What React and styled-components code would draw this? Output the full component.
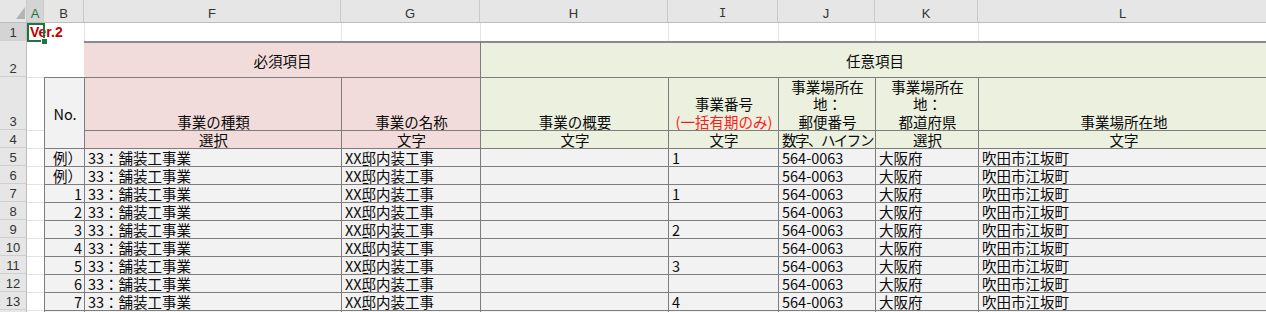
import React from 'react';
import styled, { createGlobalStyle } from 'styled-components';

const GlobalStyle = createGlobalStyle`
  html, body { margin: 0; padding: 0; background: #fff; overflow: hidden; }
`;

const CJK = `"Noto Sans CJK JP", "Noto Sans", sans-serif`;
const UI = `"Liberation Sans", Arial, sans-serif`;
const LINE = '1px solid #7d7d7d';
const THICK = '2px solid #8a8a8a';
const GRID = '1px solid #e3e3e3';
const PINK = '#f2dcdb';
const GREEN = '#ebf1de';
const GRAY = '#f2f2f2';

const Sheet = styled.div`
  display: grid;
  grid-template-columns: 27px 17px 40px 257px 139px 188px 110px 97px 103px 290px;
  grid-template-rows: 23px 18px 36px 53px 18px repeat(10, 18px);
  width: 1268px;
  font-family: ${CJK};
  font-size: 14.5px;
  color: #0a0a0a;
`;

const Corner = styled.div`
  box-sizing: border-box;
  background: #e6e6e6;
  border-right: 1px solid #cacaca;
  border-bottom: 1px solid #bdbdbd;
  display: flex;
  align-items: flex-end;
  justify-content: flex-end;
  padding: 0 1px 3px 0;
`;

const ColHead = styled.div`
  box-sizing: border-box;
  background: ${p => (p.$active ? '#d4d4d4' : '#e6e6e6')};
  color: ${p => (p.$active ? '#217346' : '#333')};
  border-right: 1px solid #cacaca;
  border-bottom: 1px solid #bdbdbd;
  display: flex;
  align-items: flex-end;
  justify-content: center;
  font-family: ${p => (p.$serif ? `"DejaVu Sans Mono", monospace` : UI)};
  font-size: ${p => (p.$serif ? '12px' : '13px')};
  line-height: 15px;
  padding-bottom: 1px;
`;

const RowHead = styled.div`
  box-sizing: border-box;
  background: ${p => (p.$active ? '#d4d4d4' : '#e6e6e6')};
  color: #333;
  border-right: 1px solid #bdbdbd;
  border-bottom: 1px solid #cfcfcf;
  display: flex;
  align-items: flex-end;
  justify-content: center;
  font-family: ${UI};
  font-size: 13px;
  line-height: 15px;
`;

const Cell = styled.div`
  box-sizing: border-box;
  min-width: 0;
  grid-column: span ${p => p.$cs || 1};
  grid-row: span ${p => p.$rs || 1};
  background: ${p => p.$bg || '#fff'};
  border-top: ${p => p.$bt || 'none'};
  border-left: ${p => p.$bl || 'none'};
  display: flex;
  flex-direction: column;
  justify-content: ${p =>
    p.$valign === 'center' ? 'center' : p.$valign === 'top' ? 'flex-start' : 'flex-end'};
  text-align: ${p => p.$align || 'left'};
  line-height: ${p => (p.$lh ? p.$lh : '17px')};
  letter-spacing: ${p => (p.$tight ? '-1.5px' : 'normal')};
  padding: 0 2px 0 3px;
  white-space: nowrap;
  overflow: visible;
`;

const SelectedCell = styled(Cell)`
  position: relative;
  z-index: 2;
  justify-content: center;
`;

const Selection = styled.div`
  position: absolute;
  left: 0;
  top: 0;
  right: -1px;
  bottom: -1px;
  border: 2px solid #217346;
  pointer-events: none;
`;

const FillHandle = styled.div`
  position: absolute;
  right: -4px;
  bottom: -4px;
  width: 5px;
  height: 5px;
  background: #217346;
  border: 1px solid #fff;
`;

const Version = styled.span`
  font-family: ${UI};
  font-weight: bold;
  font-size: 14px;
  color: #c00000;
  line-height: 17px;
`;

const Red = styled.span`
  color: #ff1a1a;
`;

const Line = styled.div``;

const letters = ['A', 'B', 'F', 'G', 'H', 'I', 'J', 'K', 'L'];

const dataRows = [
  { n: '例）', no: '1' },
  { n: '例）', no: '' },
  { n: '1', no: '1' },
  { n: '2', no: '' },
  { n: '3', no: '2' },
  { n: '4', no: '' },
  { n: '5', no: '3' },
  { n: '6', no: '' },
  { n: '7', no: '4' },
];

function HeaderCell({ bg, children, ...rest }) {
  return (
    <Cell $bg={bg} $bt={LINE} $bl={LINE} $align="center" $lh="17.5px" {...rest}>
      {children}
    </Cell>
  );
}

export default function App() {
  return (
    <>
      <GlobalStyle />
      <Sheet>
        <Corner>
          <svg width="9" height="12" viewBox="0 0 9 12">
            <polygon points="9,0 9,12 0,12" fill="#b4b4b4" />
          </svg>
        </Corner>
        {letters.map(l => (
          <ColHead key={l} $active={l === 'A'} $serif={l === 'I'}>
            {l}
          </ColHead>
        ))}

        {/* row 1 */}
        <RowHead $active>1</RowHead>
        <SelectedCell>
          <Version>Ver.2</Version>
          <Selection />
          <FillHandle />
        </SelectedCell>
        {letters.slice(1).map(l => (
          <Cell key={'r1' + l} $bl={GRID} />
        ))}

        {/* row 2 */}
        <RowHead>2</RowHead>
        <Cell $bt={GRID} />
        <Cell />
        <Cell $cs={2} $bg={PINK} $bt={THICK} $valign="center" $align="center">
          必須項目
        </Cell>
        <Cell $cs={5} $bg={GREEN} $bt={THICK} $bl={LINE} $valign="center" $align="center">
          任意項目
        </Cell>

        {/* row 3 */}
        <RowHead>3</RowHead>
        <Cell $bt={GRID} />
        <Cell $rs={2} $bg={GRAY} $bt={LINE} $bl={LINE} $valign="center" $align="center">
          No.
        </Cell>
        <HeaderCell bg={PINK}>事業の種類</HeaderCell>
        <HeaderCell bg={PINK}>事業の名称</HeaderCell>
        <HeaderCell bg={GREEN}>事業の概要</HeaderCell>
        <HeaderCell bg={GREEN}>
          <Line>事業番号</Line>
          <Line>
            <Red>(一括有期のみ)</Red>
          </Line>
        </HeaderCell>
        <HeaderCell bg={GREEN}>
          <Line>事業場所在</Line>
          <Line>地：</Line>
          <Line>郵便番号</Line>
        </HeaderCell>
        <HeaderCell bg={GREEN}>
          <Line>事業場所在</Line>
          <Line>地：</Line>
          <Line>都道府県</Line>
        </HeaderCell>
        <HeaderCell bg={GREEN}>事業場所在地</HeaderCell>

        {/* row 4 */}
        <RowHead>4</RowHead>
        <Cell $bt={GRID} />
        <HeaderCell bg={PINK} $valign="center">選択</HeaderCell>
        <HeaderCell bg={PINK} $valign="center">文字</HeaderCell>
        <HeaderCell bg={GREEN} $valign="center">文字</HeaderCell>
        <HeaderCell bg={GREEN} $valign="center">文字</HeaderCell>
        <HeaderCell bg={GREEN} $valign="center" $tight>
          数字、ハイフン
        </HeaderCell>
        <HeaderCell bg={GREEN} $valign="center">選択</HeaderCell>
        <HeaderCell bg={GREEN} $valign="center">文字</HeaderCell>

        {/* data rows */}
        {dataRows.map((r, i) => (
          <React.Fragment key={i}>
            <RowHead>{i + 5}</RowHead>
            <Cell $bt={GRID} />
            <Cell $bg={GRAY} $bt={LINE} $bl={LINE} $align="right">
              {r.n}
            </Cell>
            <Cell $bg={GRAY} $bt={LINE} $bl={LINE}>33：舗装工事業</Cell>
            <Cell $bg={GRAY} $bt={LINE} $bl={LINE}>XX邸内装工事</Cell>
            <Cell $bg={GRAY} $bt={LINE} $bl={LINE} />
            <Cell $bg={GRAY} $bt={LINE} $bl={LINE}>{r.no}</Cell>
            <Cell $bg={GRAY} $bt={LINE} $bl={LINE}>564-0063</Cell>
            <Cell $bg={GRAY} $bt={LINE} $bl={LINE}>大阪府</Cell>
            <Cell $bg={GRAY} $bt={LINE} $bl={LINE}>吹田市江坂町</Cell>
          </React.Fragment>
        ))}

        {/* row 14 (cut off) */}
        <RowHead>14</RowHead>
        <Cell $bt={GRID} />
        {Array.from({ length: 8 }).map((_, i) => (
          <Cell key={'r14' + i} $bg={GRAY} $bt={LINE} $bl={LINE} />
        ))}
      </Sheet>
    </>
  );
}
